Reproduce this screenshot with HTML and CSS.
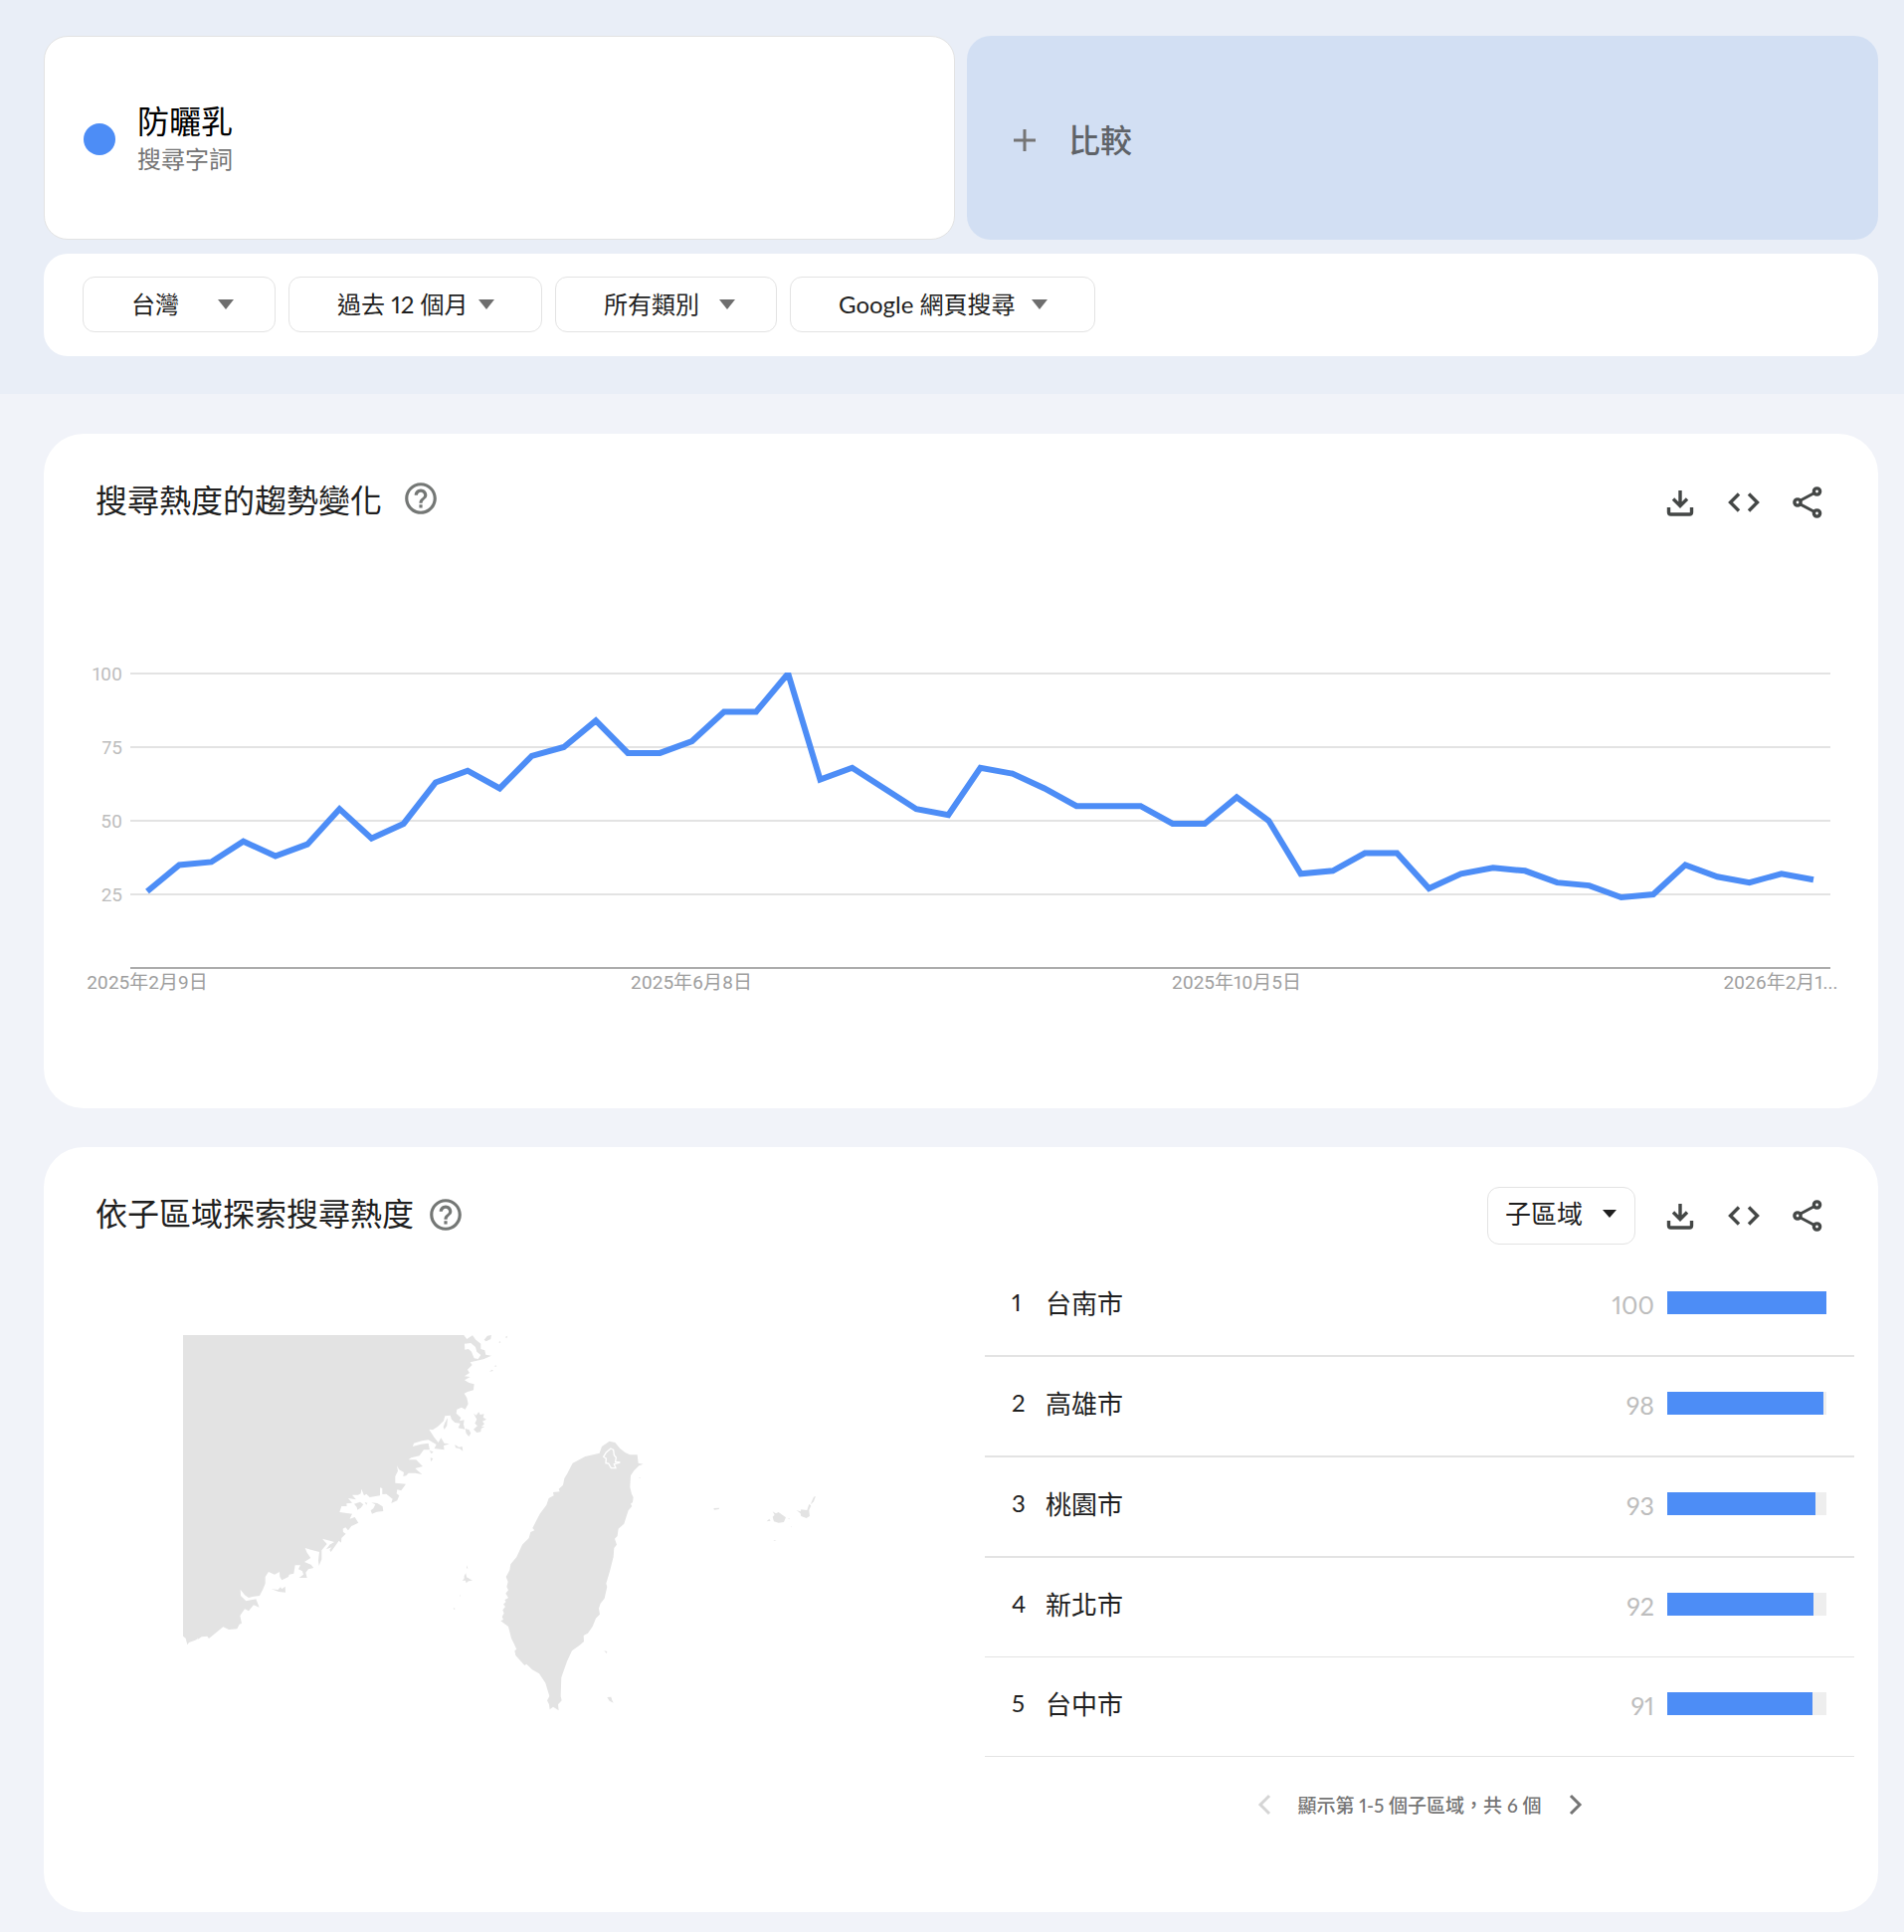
FILE: index.html
```html
<!DOCTYPE html>
<html lang="zh-Hant">
<head>
    <meta charset="UTF-8">
    <meta name="viewport" content="width=device-width, initial-scale=1.0">
    <title>防曬乳 - 搜尋趨勢</title>
    <link rel="stylesheet" href="styles.css">
</head>
<body>

<!-- Shared icons -->
<svg class="icon-defs" aria-hidden="true">
    <symbol id="icon-help" viewBox="0 0 24 24">
        <path d="M11 18h2v-2h-2v2zm1-16C6.48 2 2 6.48 2 12s4.480 10 10 10 10-4.480 10-10S17.520 2 12 2zm0 18c-4.410 0-8-3.590-8-8s3.590-8 8-8 8 3.590 8 8-3.590 8-8 8zm0-14c-2.210 0-4 1.790-4 4h2c0-1.100.900-2 2-2s2 .900 2 2c0 2-3 1.750-3 5h2c0-2.250 3-2.500 3-5 0-2.210-1.790-4-4-4z"/>
    </symbol>
    <symbol id="icon-download" viewBox="0 0 32 32">
        <path d="M16 4v16M9 12.500 16 19.500l7-7M4.500 21v5q0 2 2 2h19q2 0 2-2v-5" fill="none" stroke="currentColor" stroke-width="3.400"/>
    </symbol>
    <symbol id="icon-code" viewBox="0 0 32 32">
        <path d="M11 7.500 2.500 16 11 24.500M21 7.500l8.500 8.500-8.500 8.500" fill="none" stroke="currentColor" stroke-width="3.400"/>
    </symbol>
    <symbol id="icon-share" viewBox="0 0 32 32">
        <path d="M23 6.500 8 14.500M8 17.500l15 8" fill="none" stroke="currentColor" stroke-width="3"/>
        <g fill="none" stroke="currentColor" stroke-width="3.400">
            <circle cx="6" cy="16" r="3.100"/>
            <circle cx="25.500" cy="5" r="3.100"/>
            <circle cx="25.500" cy="27" r="3.100"/>
        </g>
    </symbol>
</svg>

<!-- Search terms and filters -->
<header class="explore-header">
    <div class="terms">
        <div class="term-card">
            <span class="term-dot"></span>
            <div>
                <div class="term-name">防曬乳</div>
                <div class="term-type">搜尋字詞</div>
            </div>
        </div>
        <button class="compare-card">
            <svg class="plus" viewBox="0 0 24 24"><path d="M12 1v22M1 12h22"/></svg>
            比較
        </button>
    </div>
    <div class="filters">
        <div class="picker picker-geo"><select aria-label="地區"><option>台灣</option></select></div>
        <div class="picker picker-time"><select aria-label="時間"><option>過去 12 個月</option></select></div>
        <div class="picker picker-category"><select aria-label="類別"><option>所有類別</option></select></div>
        <div class="picker picker-property"><select aria-label="搜尋類型"><option>Google 網頁搜尋</option></select></div>
    </div>
</header>

<main>
    <!-- Interest over time -->
    <section class="card">
        <div class="card-header">
            <h2>搜尋熱度的趨勢變化</h2>
            <button class="icon-button help help-wide" aria-label="說明"><svg><use href="#icon-help"/></svg></button>
            <div class="actions">
                <button class="icon-button" aria-label="下載"><svg><use href="#icon-download"/></svg></button>
                <button class="icon-button" aria-label="嵌入"><svg><use href="#icon-code"/></svg></button>
                <button class="icon-button" aria-label="分享"><svg><use href="#icon-share"/></svg></button>
            </div>
        </div>
        <svg class="chart" viewBox="0 0 1844 380" role="img" aria-label="搜尋熱度的趨勢變化">
            <clipPath id="plot"><rect x="87" y="26" width="1709" height="300"/></clipPath>
            <g class="grid">
                <path d="M87 27H1796M87 101H1796M87 175H1796M87 249H1796"/>
                <path class="axis" d="M87 323H1796"/>
            </g>
            <g class="y-labels">
                <text x="79" y="34">100</text>
                <text x="79" y="108">75</text>
                <text x="79" y="182">50</text>
                <text x="79" y="256">25</text>
            </g>
            <g class="x-labels">
                <text x="104" y="344">2025年2月9日</text>
                <text x="651" y="344">2025年6月8日</text>
                <text x="1199" y="344">2025年10月5日</text>
                <text x="1746" y="344">2026年2月1...</text>
            </g>
            <polyline id="trend" class="trend" clip-path="url(#plot)" points=""/>
        </svg>
    </section>

    <!-- Interest by subregion -->
    <section class="card">
        <div class="card-header">
            <h2>依子區域探索搜尋熱度</h2>
            <button class="icon-button help" aria-label="說明"><svg><use href="#icon-help"/></svg></button>
            <div class="actions">
                <div class="picker picker-region"><select aria-label="區域層級"><option>子區域</option></select></div>
                <button class="icon-button" aria-label="下載"><svg><use href="#icon-download"/></svg></button>
                <button class="icon-button" aria-label="嵌入"><svg><use href="#icon-code"/></svg></button>
                <button class="icon-button" aria-label="分享"><svg><use href="#icon-share"/></svg></button>
            </div>
        </div>
        <div class="region-body">
            <svg class="map" viewBox="0 0 640 384" role="img" aria-label="台灣地圖">
                <!-- Mainland coast -->
                <g transform="translate(-14 -12) scale(.3333)">
                    <path d="M42 35H888L898 48 915 37 925 50 940 62 940 78 952 82 955 95 972 98 950 108 935 112 908 118 914 126 900 140 906 150 891 160 908 162 891 172 905 180 920 184 918 202 900 207 890 212 898 225 902 244 893 260 882 254 868 260 866 272 880 285 876 295 890 292 888 305 892 320 872 316 878 302 862 300 852 290 848 278 832 280 828 295 810 312 795 322 784 320 800 345 812 360 820 346 830 362 845 364 828 370 830 382 800 378 806 366 792 358 782 352 765 354 738 362 735 372 760 365 782 362 786 382 768 382 755 400 730 406 722 412 745 412 765 432 742 438 763 456 742 452 722 452 715 460 706 462 708 450 694 442 687 430 690 446 682 462 682 482 714 485 700 505 688 502 686 514 694 520 688 535 670 543 674 530 655 515 643 516 643 498 636 496 636 520 605 525 595 515 588 520 580 500 578 514 570 518 552 518 564 532 540 528 552 542 535 544 536 552 520 552 514 570 552 575 545 590 560 585 571 602 550 612 540 625 532 616 524 620 525 630 533 635 520 648 519 662 512 656 488 690 484 684 490 676 474 682 484 668 498 660 485 656 462 650 476 666 460 685 460 712 452 732 450 715 453 690 430 684 410 678 416 692 427 708 408 720 428 728 436 738 420 742 412 752 416 768 392 768 405 758 402 748 390 742 396 730 380 730 376 755 362 758 360 765 340 775 334 765 333 750 318 758 300 750 290 765 290 785 284 800 273 822 255 824 240 828 228 820 215 803 216 822 232 838 262 832 272 857 255 850 240 868 228 862 214 882 219 905 212 908 205 922 180 924 163 916 120 951 115 944 98 946 85 955 88 948 82 955 60 963 55 970 50 950 42 944Z"/>
                    <path class="water" d="M891 62 910 60 924 72 928 86 940 96 932 108 920 106 912 86 903 78 892 80Z"/>
                    <path d="M950 50 960 38 972 36 970 48 956 55ZM994 58l4-4 2 6zM1014 42l7-4-3 8zM966 146l8-6 4 4zM980 130l6-3 2 4zM832 300l8-15-2 24-8 12-3-8zM918 272l8 6 8-10 4 8 12-2-3 10 10 6-12 6 6 8-9 8-2 16-12 2-10-10 12-10-8-8 6-12zM893 318l12 4 5 10-6 10-8-10zM862 366l12 8 10-2 2 14-10-8-12-2zM788 406l8 2-6 10zM785 384l12 4-6 6zM558 545l18-6 10 8-8 10-10 6-2-8zM608 565l8-6 6-12-12-6 18 2 16 10 2 14-20 2-14 6zM590 540l8 2-3 6zM308 802l20 2 8-8 4 6 10-8 1 18-20-2zM890 762l5-8 2 12 8 4 10 6-12 2-7 6-2-8-10 0 6-6zM898 730l3 10-4-1zM876 820l3 2-3 2zM857 858l6 3-4 3z"/>
                </g>
                <!-- Taiwan and the islands east of it -->
                <g transform="translate(296 88) scale(.3333)">
                    <path d="M398 56 415 60 430 78 445 90 460 97 482 97 485 122 500 125 487 130 472 145 462 160 460 195 465 215 470 225 468 240 462 245 466 252 455 265 442 305 425 320 422 342 414 350 420 368 412 378 410 405 400 445 388 485 391 495 383 530 371 545 366 560 369 578 357 590 347 615 333 635 320 642 321 660 310 670 285 688 270 720 253 768 251 825 254 838 243 850 245 868 228 857 218 865 216 850 210 838 217 825 205 785 186 757 165 745 148 728 142 732 115 702 112 688 118 683 102 650 93 615 80 605 70 598 78 594 74 585 80 575 76 565 84 555 78 548 86 540 82 535 93 528 85 515 93 505 88 495 92 480 86 465 97 445 100 427 118 405 135 368 155 348 160 330 172 325 166 318 188 275 208 248 215 228 230 220 228 210 248 208 245 200 258 188 262 168 270 155 287 122 325 102 368 92 375 72Z"/>
                    <path class="border" d="M402 78 410 82 412 98 418 105 416 118 430 120 412 125 417 137 403 137 395 123 387 122 388 108 380 103 388 90Z"/>
                    <path d="M712 258l18-1-2 4-14 2zM890 268l10 6 8-4 22 16-6 14-16 2-14-4-4-14 6-6zM872 298l8-8 4 6zM962 264l12 4 2-6 18 2 6-18 6 4-6 14 2 18-10 6-16-6-2-8zM1006 242l8-18 6-2-6 16-8 8zM892 354l10 2-6 1zM937 288l6 2-4 1zM944 312l4 2-1 2zM382 688l9 2-2 6zM391 828l12-1 3 10 4 8-12-6zM487 165l5 1-3 2zM0 10l12-8-2 10 12 0-16 8-4 8z"/>
                </g>
            </svg>
            <div class="regions">
                <table>
                    <tbody>
                        <tr><td class="rank">1</td><td>台南市</td><td class="value">100</td><td class="bar-cell"><div class="bar"><div class="bar-fill" style="width: 100%"></div></div></td></tr>
                        <tr><td class="rank">2</td><td>高雄市</td><td class="value">98</td><td class="bar-cell"><div class="bar"><div class="bar-fill" style="width: 98%"></div></div></td></tr>
                        <tr><td class="rank">3</td><td>桃園市</td><td class="value">93</td><td class="bar-cell"><div class="bar"><div class="bar-fill" style="width: 93%"></div></div></td></tr>
                        <tr><td class="rank">4</td><td>新北市</td><td class="value">92</td><td class="bar-cell"><div class="bar"><div class="bar-fill" style="width: 92%"></div></div></td></tr>
                        <tr><td class="rank">5</td><td>台中市</td><td class="value">91</td><td class="bar-cell"><div class="bar"><div class="bar-fill" style="width: 91%"></div></div></td></tr>
                    </tbody>
                </table>
                <div class="pager">
                    <button class="page-button" aria-label="上一頁" disabled><svg viewBox="0 0 24 24"><path d="m17 3-9 9 9 9"/></svg></button>
                    <span>顯示第 1-5 個子區域，共 6 個</span>
                    <button class="page-button" aria-label="下一頁"><svg viewBox="0 0 24 24"><path d="m7 3 9 9-9 9"/></svg></button>
                </div>
            </div>
        </div>
    </section>
</main>

<script>
    // Weekly interest, 0-100
    const values = [26, 35, 36, 43, 38, 42, 54, 44, 49, 63, 67, 61, 72, 75, 84, 73, 73, 77, 87, 87,
        100, 64, 68, 61, 54, 52, 68, 66, 61, 55, 55, 55, 49, 49, 58, 50, 32, 33, 39, 39,
        27, 32, 34, 33, 29, 28, 24, 25, 35, 31, 29, 32, 30];
    const left = 104, right = 1779, bottom = 323, top100 = 27;

    document.getElementById('trend').setAttribute('points', values.map((v, i) => {
        const x = left + i * (right - left) / (values.length - 1);
        const y = bottom - v * (bottom - top100) / 100;
        return `${x},${y}`;
    }).join(' '));
</script>

</body>
</html>
```
FILE: styles.css
```css
/* Global Styles */
* {
    box-sizing: border-box;
}
body {
    margin: 0;
    font-family: Lato, "Noto Sans CJK TC", sans-serif;
    font-size: 24px;
    font-variant-numeric: proportional-nums;
    color: #1f1f1f;
    background-color: #f1f3f9;
}
button, select {
    font: inherit;
    color: inherit;
    background: none;
    border: none;
    cursor: pointer;
}
.icon-defs {
    position: absolute;
    width: 0;
    height: 0;
}
/* Header */
.explore-header {
    display: flex;
    flex-direction: column;
    gap: 14px;
    padding: 36px 26px 38px 44px;
    background-color: #e9eef7;
}
.terms {
    display: grid;
    grid-template-columns: 1fr 1fr;
    gap: 12px;
}
.term-card, .compare-card {
    display: flex;
    align-items: center;
    height: 205px;
    border-radius: 24px;
}
.term-card {
    gap: 22px;
    padding: 2px 39px 0;
    background-color: white;
    border: 1px solid #e3e3e3;
}
.term-dot {
    width: 32px;
    height: 32px;
    border-radius: 50%;
    background-color: #4d8df6;
}
.term-name {
    font-size: 32px;
    line-height: 40px;
    color: black;
}
.term-type {
    line-height: 36px;
    color: #757575;
}
.compare-card {
    gap: 32px;
    padding: 0 46px;
    background-color: #d2dff3;
    color: #5f6368;
    font-size: 32px;
    font-weight: 500;
}
.plus {
    width: 24px;
    height: 24px;
    margin-top: 4px;
    stroke: #757575;
    stroke-width: 3;
}
.filters {
    display: flex;
    gap: 13px;
    padding: 23px 39px 24px;
    background-color: white;
    border-radius: 24px;
}
/* Drop-downs */
.picker {
    position: relative;
    height: 56px;
    border: 1px solid #e3e3e3;
    border-radius: 12px;
}
.picker select {
    width: 100%;
    height: 100%;
    padding: 0 0 2px 48px;
    appearance: none;
    outline: none;
}
.picker::after {
    content: "";
    position: absolute;
    top: 22px;
    right: 47px;
    border: 8px solid transparent;
    border-top: 10px solid #6e6e6e;
    border-bottom: none;
    pointer-events: none;
}
.picker-geo {
    width: 194px;
}
.picker-time {
    width: 255px;
}
.picker-category {
    width: 223px;
}
.picker-property {
    width: 307px;
}
.picker-geo::after, .picker-category::after {
    right: 41px;
}
.picker-region {
    width: 149px;
    height: 58px;
    margin-right: 13px;
    font-size: 26px;
}
.picker-region select {
    padding: 0 0 4px 17px;
}
.picker-region::after {
    right: 18px;
    border-width: 8px 7px 0;
    border-top-color: #1f1f1f;
}
/* Cards */
main {
    display: flex;
    flex-direction: column;
    gap: 39px;
    padding: 40px 26px 21px 44px;
}
.card {
    background-color: white;
    border-radius: 40px;
}
.card-header {
    display: flex;
    align-items: center;
    height: 136px;
    padding: 0 39px 0 52px;
}
h2 {
    margin: 0;
    padding-bottom: 2px;
    font-size: 32px;
    font-weight: 400;
    line-height: 40px;
}
.icon-button {
    display: flex;
    align-items: center;
    justify-content: center;
    width: 64px;
    height: 64px;
    padding: 0;
    color: #444746;
}
.icon-button svg {
    width: 32px;
    height: 32px;
}
.help {
    width: 38px;
    margin-left: 13px;
    color: #747775;
}
.help svg {
    width: 38px;
    height: 38px;
    fill: currentColor;
}
.help-wide {
    margin: 0 0 6px 20px;
}
.actions {
    display: flex;
    align-items: center;
    margin-left: auto;
    padding-top: 2px;
}
/* Line chart */
.chart {
    display: block;
    width: 100%;
    margin-top: 78px;
    padding-bottom: 84px;
    box-sizing: content-box;
    font-family: Roboto, "Noto Sans CJK TC", sans-serif;
    font-size: 19px;
}
.grid path {
    stroke: #e3e3e3;
    stroke-width: 2;
}
.grid .axis {
    stroke: #acacac;
}
.y-labels {
    fill: #bdbdbd;
    text-anchor: end;
}
.x-labels {
    fill: #9e9e9e;
    text-anchor: middle;
}
.trend {
    fill: none;
    stroke: #4d8df6;
    stroke-width: 6;
}
/* Subregions */
.region-body {
    display: flex;
    justify-content: space-between;
    align-items: flex-start;
    padding: 0 24px 84px 140px;
}
.map {
    width: 640px;
    margin-top: 53px;
    fill: #e3e3e3;
}
.map .water {
    fill: white;
}
.map .border {
    fill: none;
    stroke: white;
    stroke-width: 4;
}
.regions {
    width: 874px;
    margin-top: -26px;
}
table {
    width: 100%;
    border-collapse: separate;
    border-spacing: 0;
    font-size: 26px;
}
td {
    height: 101px;
    padding: 0 0 9px;
    border-bottom: 2px solid #e3e3e3;
}
tr:nth-child(n+4) td {
    height: 100px;
    border-bottom-width: 1px;
}
.rank {
    width: 61px;
    padding-left: 27px;
    font-size: 24px;
}
.value {
    padding: 0 13px 4px 0;
    text-align: right;
    font-size: 25px;
    color: #bdbdbd;
}
.bar-cell {
    width: 188px;
    padding: 0 28px 6px 0;
}
.bar {
    height: 23px;
    background-color: #eeeeee;
}
.bar-fill {
    height: 100%;
    background-color: #4d8df6;
}
.pager {
    display: flex;
    justify-content: center;
    align-items: center;
    gap: 22px;
    height: 48px;
    margin-top: 24px;
    font-size: 19px;
    font-weight: 500;
    color: #757575;
}
.pager span {
    padding-bottom: 2px;
}
.page-button {
    width: 24px;
    height: 24px;
    padding: 0;
}
.page-button svg {
    display: block;
    fill: none;
    stroke: currentColor;
    stroke-width: 3;
}
.page-button:disabled {
    color: #d5d5d5;
}
```
